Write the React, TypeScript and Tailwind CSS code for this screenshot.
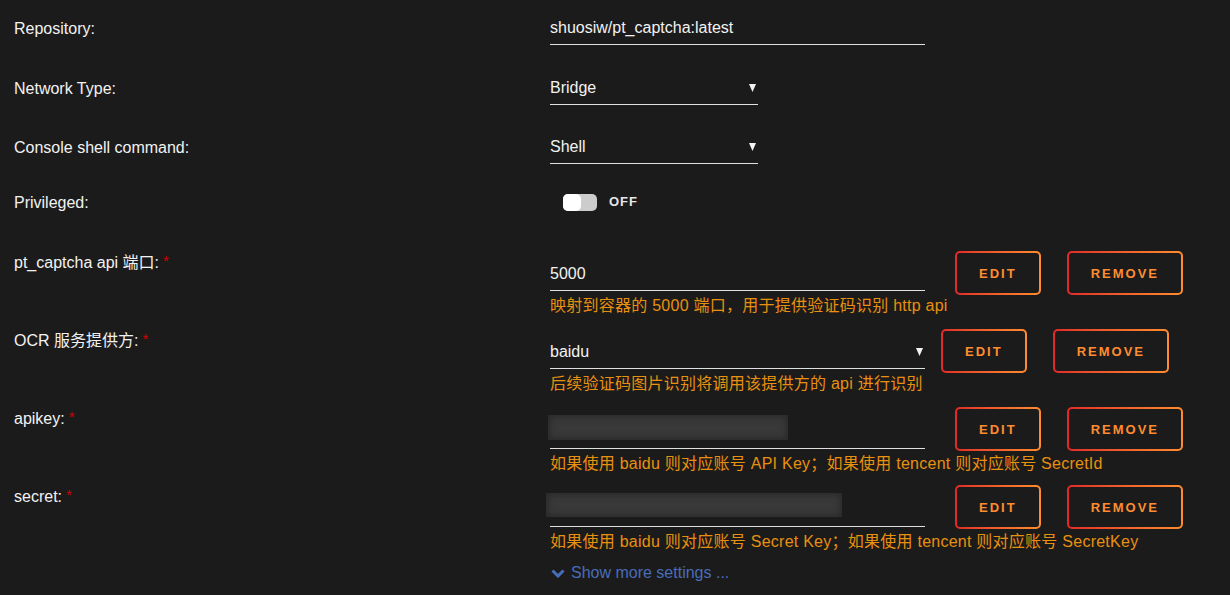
import React from "react";

const Arrow = () => (
    <svg width="7" height="8" viewBox="0 0 7 8" className="shrink-0">
        <path d="M0 0h7L3.5 8z" fill="#f2f2f2" />
    </svg>
);

const Button = ({ children }: { children: React.ReactNode }) => (
    <div className="rounded-[5px] bg-linear-to-r from-[#e22828] to-[#ff8c2f] p-[2px]">
        <div className="flex h-[40px] items-center rounded-[3px] bg-[#1c1b1b] px-[22px] pt-[1px] text-[13px] font-bold tracking-[2px] text-[#ff8c2f]">
            {children}
        </div>
    </div>
);

const SimpleRow = ({ label, className, children }: { label: string; className: string; children: React.ReactNode }) => (
    <div className={`flex items-center ${className}`}>
        <div className="w-[536px] pt-[1px] leading-5 text-[#f2f2f2]">{label}</div>
        {children}
    </div>
);

type ConfigProps = {
    label: string;
    help: string;
    field: React.ReactNode;
    gap: string;
    className?: string;
};

const ConfigRow = ({ label, help, field, gap, className = "" }: ConfigProps) => (
    <div className={`flex h-[66px] items-start ${className}`}>
        <div className="w-[536px] pt-[2px] leading-5 text-[#f2f2f2]">
            {label}
            <span className="ml-[4px] align-top text-[15px] leading-4 text-[#d40000]">*</span>
        </div>
        <div className="w-[375px] pt-[6px]">
            {field}
            <div className="mt-[4px] whitespace-nowrap leading-[22px] tracking-[0.25px] text-[#e8900f]">{help}</div>
        </div>
        <div className={`flex gap-[26px] ${gap}`}>
            <Button>EDIT</Button>
            <Button>REMOVE</Button>
        </div>
    </div>
);

const Hidden = ({ width, height, offset }: { width: string; height: string; offset: string }) => (
    <div className="h-[34px] border-b border-[#e0e0e0]">
        <div className={`mt-[2px] ${width} ${height} ${offset} bg-[#3a3939] shadow-[inset_0_0_6px_2px_#2a2929]`} />
    </div>
);

export default function App() {
    return (
        <div className="h-[595px] w-full overflow-hidden bg-[#1c1b1b] px-[14px] pt-[11px] font-['Liberation_Sans','Noto_Sans_CJK_SC',sans-serif] text-[16px]">
            <SimpleRow label="Repository:" className="">
                <div className="h-[34px] w-[375px] border-b border-[#e0e0e0] leading-[33px] text-[#f2f2f2]">
                    shuosiw/pt_captcha:latest
                </div>
            </SimpleRow>

            <SimpleRow label="Network Type:" className="mt-[26px]">
                <div className="flex h-[34px] w-[208px] items-center justify-between border-b border-[#e0e0e0] pr-[2px] text-[#f2f2f2]">
                    Bridge
                    <Arrow />
                </div>
            </SimpleRow>

            <SimpleRow label="Console shell command:" className="mt-[25px]">
                <div className="flex h-[34px] w-[208px] items-center justify-between border-b border-[#e0e0e0] pr-[2px] pt-[1px] text-[#f2f2f2]">
                    Shell
                    <Arrow />
                </div>
            </SimpleRow>

            <SimpleRow label="Privileged:" className="mt-[21px] h-[34px]">
                <div className="ml-[13px] flex items-center gap-[12px]">
                    <div className="flex h-[17px] w-[34px] rounded-[5px] bg-[#cccccc]">
                        <div className="h-[17px] w-[18px] rounded-[5px] bg-white" />
                    </div>
                    <span className="text-[13px] font-bold tracking-[1px] text-[#e6e6e6]">OFF</span>
                </div>
            </SimpleRow>

            <ConfigRow
                className="mt-[32px]"
                label="pt_captcha api 端口:"
                help="映射到容器的 5000 端口，用于提供验证码识别 http api"
                gap="ml-[30px]"
                field={
                    <div className="h-[34px] border-b border-[#e0e0e0] leading-[33px] text-[#f2f2f2]">5000</div>
                }
            />

            <ConfigRow
                className="mt-[12px]"
                label="OCR 服务提供方:"
                help="后续验证码图片识别将调用该提供方的 api 进行识别"
                gap="ml-[16px]"
                field={
                    <div className="flex h-[34px] items-center justify-between border-b border-[#e0e0e0] pr-[2px] text-[#f2f2f2]">
                        baidu
                        <Arrow />
                    </div>
                }
            />

            <ConfigRow
                className="mt-[12px]"
                label="apikey:"
                help="如果使用 baidu 则对应账号 API Key；如果使用 tencent 则对应账号 SecretId"
                gap="ml-[30px]"
                field={<Hidden width="w-[240px]" height="h-[25px]" offset="-ml-[2px]" />}
            />

            <ConfigRow
                className="mt-[12px]"
                label="secret:"
                help="如果使用 baidu 则对应账号 Secret Key；如果使用 tencent 则对应账号 SecretKey"
                gap="ml-[30px]"
                field={<Hidden width="w-[296px]" height="h-[24px]" offset="-ml-[4px]" />}
            />

            <div className="mt-[12px] flex items-center pl-[537px] leading-5 text-[#486dba]">
                <svg width="14" height="10" viewBox="0 0 14 10" className="mr-[6px]">
                    <path d="M1.5 2.5 7 8l5.5-5.5" fill="none" stroke="#486dba" strokeWidth="3" />
                </svg>
                Show more settings ...
            </div>
        </div>
    );
}
